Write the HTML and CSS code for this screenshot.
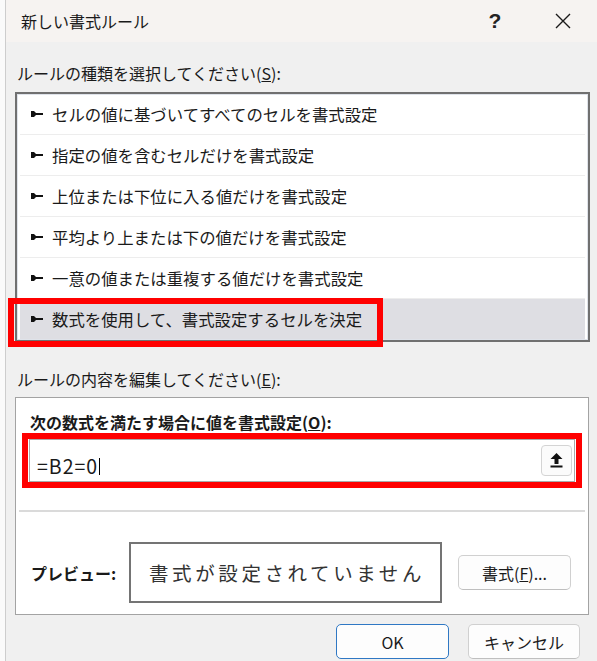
FILE: index.html
```html
<!DOCTYPE html>
<html lang="ja">
<head>
<meta charset="utf-8">
<title>新しい書式ルール</title>
<link rel="stylesheet" href="styles.css">
</head>
<body>
<div class="window">
  <div class="titlebar">
    <span class="title">新しい書式ルール</span>
    <span class="ctrl help">?</span>
    <span class="ctrl close">
      <svg width="16" height="16" viewBox="0 0 16 16"><path d="M1 1 L15 15 M15 1 L1 15" stroke="#1a1a1a" stroke-width="1.4" fill="none"/></svg>
    </span>
  </div>
  <div class="content">
    <div class="label label-type">ルールの種類を選択してください(<u>S</u>):</div>
    <div class="listbox">
      <div class="row"><svg class="pt" width="12" height="6" viewBox="0 0 12 6"><path d="M0 0 H3 L5 2 H12 V4 H5 L3 6 H0 Z"/></svg><span>セルの値に基づいてすべてのセルを書式設定</span></div>
      <div class="row"><svg class="pt" width="12" height="6" viewBox="0 0 12 6"><path d="M0 0 H3 L5 2 H12 V4 H5 L3 6 H0 Z"/></svg><span>指定の値を含むセルだけを書式設定</span></div>
      <div class="row"><svg class="pt" width="12" height="6" viewBox="0 0 12 6"><path d="M0 0 H3 L5 2 H12 V4 H5 L3 6 H0 Z"/></svg><span>上位または下位に入る値だけを書式設定</span></div>
      <div class="row"><svg class="pt" width="12" height="6" viewBox="0 0 12 6"><path d="M0 0 H3 L5 2 H12 V4 H5 L3 6 H0 Z"/></svg><span>平均より上または下の値だけを書式設定</span></div>
      <div class="row"><svg class="pt" width="12" height="6" viewBox="0 0 12 6"><path d="M0 0 H3 L5 2 H12 V4 H5 L3 6 H0 Z"/></svg><span>一意の値または重複する値だけを書式設定</span></div>
      <div class="row selected"><svg class="pt" width="12" height="6" viewBox="0 0 12 6"><path d="M0 0 H3 L5 2 H12 V4 H5 L3 6 H0 Z"/></svg><span>数式を使用して、書式設定するセルを決定</span><span class="mark mark-row"></span></div>
    </div>
    <div class="label label-edit">ルールの内容を編集してください(<u>E</u>):</div>
    <div class="group">
      <div class="group-label">次の数式を満たす場合に値を書式設定(<u>O</u>):</div>
      <div class="highlight">
        <div class="formula">
          <span class="formula-text">=B2=0</span><span class="caret"></span>
          <span class="collapse">
            <svg width="13" height="15" viewBox="0 0 13 15"><path d="M6.5 0 L0.5 6 H4.5 V11 H8.5 V6 H12.5 Z" fill="#111"/><rect x="0.5" y="12.5" width="12" height="2" fill="#111"/></svg>
          </span>
        </div>
      </div>
      <div class="sep"></div>
      <div class="preview-row">
        <span class="preview-label">プレビュー:</span>
        <div class="preview-box">書式が設定されていません</div>
        <button class="btn btn-format">書式(<u>F</u>)...</button>
      </div>
    </div>
    <div class="footer">
      <button class="btn btn-ok">OK</button>
      <button class="btn btn-cancel">キャンセル</button>
    </div>
  </div>
</div>
</body>
</html>
```
FILE: styles.css
```css
* { box-sizing: border-box; }
html, body { margin: 0; padding: 0; }
body {
  background: #fafafa;
  font-family: "Noto Sans CJK JP", "Noto Sans", sans-serif;
  color: #1a1a1a;
  font-size: 16px;
  width: 597px;
  height: 661px;
  overflow: hidden;
}
.window {
  margin-left: 5px;
  width: 592px;
  height: 661px;
  border-left: 1px solid #cdcdcd;
  background: #f0f0f0;
}
.titlebar {
  height: 42px;
  background: #f6f3f1;
  display: flex;
  align-items: center;
  padding-left: 15px;
}
.title { font-size: 16px; line-height: 20px; }
.ctrl {
  width: 68px;
  display: flex;
  justify-content: center;
  align-items: center;
  line-height: 20px;
}
.help { margin-left: auto; font-size: 21px; font-weight: bold; font-family: "Liberation Sans", sans-serif; color: #222; }
.close svg { display: block; }
.content {
  padding: 0 8px 0 9px;
  display: flex;
  flex-direction: column;
}
.label { font-size: 16px; line-height: 20px; padding-left: 2px; }
.label-type { margin-top: 21px; }
.listbox {
  margin-top: 9px;
  width: 575px;
  border: 2px solid #707070;
  background: #fff;
  padding: 0 3px 1px 3px;
  box-shadow: inset 0 0 0 1px #dfe3ea;
}
.row {
  height: 41px;
  display: flex;
  align-items: center;
  padding-left: 11px;
  border-bottom: 1px solid #ededed;
  position: relative;
  font-size: 16.4px;
}
.row:last-child { border-bottom: none; height: 40px; }
.row .pt { fill: #111; margin-right: 9px; flex: none; }
.row.selected { background: #dedee3; }
.mark {
  position: absolute;
  border: 6px solid #ff0000;
  pointer-events: none;
}
.mark-row { left: -12px; top: -1px; width: 375px; height: 49px; }
.label-edit { margin-top: 27px; }
.group {
  margin-top: 8px;
  width: 574px;
  height: 218px;
  border: 1px solid #a3a3a3;
  background: #fff;
  display: flex;
  flex-direction: column;
}
.group-label {
  font-weight: bold;
  font-size: 16px;
  line-height: 20px;
  margin-top: 14px;
  padding-left: 14px;
}
.highlight {
  margin: 1px 6px 0 6px;
  border: 6px solid #ff0000;
  padding: 0 1px;
  height: 55px;
}
.formula {
  height: 43px;
  border: 1px solid #a9a9a9;
  background: #fff;
  display: flex;
  align-items: center;
  padding-left: 7px;
  padding-right: 2px;
}
.formula-text {
  font-size: 19.5px;
  letter-spacing: 1px;
  line-height: 20px;
  margin-top: 10px;
}
.caret {
  width: 1px;
  height: 17px;
  background: #000;
  margin-top: 12px;
  margin-left: 1px;
}
.collapse {
  margin-left: auto;
  width: 31px;
  height: 31px;
  border: 1px solid #d4d4d4;
  border-radius: 4px;
  background: #fbfbfb;
  display: flex;
  align-items: center;
  justify-content: center;
}
.collapse svg { display: block; }
.sep {
  height: 2px;
  background: #dadada;
  margin: 22px 3px 0 3px;
}
.preview-row {
  margin-top: 30px;
  display: flex;
  align-items: center;
  padding-left: 15px;
}
.preview-label { font-weight: bold; font-size: 16px; line-height: 20px; width: 98px; }
.preview-box {
  width: 313px;
  height: 61px;
  border: 2px solid #747474;
  display: flex;
  align-items: center;
  justify-content: center;
  font-size: 19.5px;
  letter-spacing: 3.6px;
  padding-left: 3px;
  color: #333;
}
.btn {
  font-family: "Noto Sans CJK JP", "Noto Sans", sans-serif;
  font-size: 16px;
  color: #1a1a1a;
  background: #fdfdfd;
  border: 1px solid #d0d0d0;
  border-bottom-color: #bfbfbf;
  border-radius: 5px;
  height: 35px;
  width: 113px;
  padding: 0;
  line-height: 20px;
}
.btn-format { margin-left: 16px; }
.footer {
  margin-top: 9px;
  display: flex;
  justify-content: flex-end;
  gap: 19px;
  padding-right: 9px;
}
.btn-ok {
  border: 1.5px solid #2f78c4;
}
.btn-cancel { width: 112px; }
```
